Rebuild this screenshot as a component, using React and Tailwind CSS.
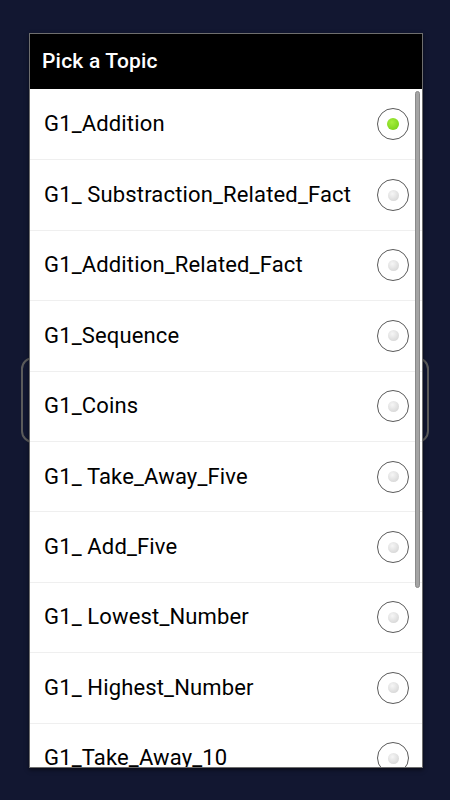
import React from "react";

const topics = [
  "G1_Addition",
  "G1_ Substraction_Related_Fact",
  "G1_Addition_Related_Fact",
  "G1_Sequence",
  "G1_Coins",
  "G1_ Take_Away_Five",
  "G1_ Add_Five",
  "G1_ Lowest_Number",
  "G1_ Highest_Number",
  "G1_Take_Away_10",
];

function Radio({ checked }) {
  return (
    <div className="w-[32px] h-[32px] rounded-full border-[1.5px] border-[#5a5a5a] bg-white flex items-center justify-center shrink-0">
      {checked ? (
        <div className="w-[12px] h-[12px] rounded-full bg-[radial-gradient(circle_at_40%_35%,#a6ee3c,#6fcb12)]" />
      ) : (
        <div className="w-[11px] h-[11px] rounded-full bg-[radial-gradient(circle_at_40%_35%,#f6f6f6,#cfcfcf)]" />
      )}
    </div>
  );
}

export default function App() {
  return (
    <div
      className="relative w-[450px] h-[800px] bg-[#121731] overflow-hidden"
      style={{ fontFamily: "Roboto, 'Noto Sans', sans-serif" }}
    >
      <div className="absolute left-[21px] top-[357px] w-[408px] h-[86px] rounded-[12px] border-2 border-[#5b5b5b]" />
      <div className="absolute left-[29px] top-[33px] w-[394px] h-[735px] border border-[#6e6e6e] bg-white flex flex-col overflow-hidden shadow-[0_2px_4px_rgba(0,0,0,0.5)]">
        <div className="h-[55px] bg-black flex items-center pl-[12px] shrink-0">
          <span className="text-white text-[21px] font-medium tracking-[0.2px]">Pick a Topic</span>
        </div>
        <div className="relative flex-1 overflow-hidden">
          <div className="flex flex-col">
            {topics.map((t, i) => (
              <div
                key={t}
                className={`h-[70.4px] flex items-center justify-between pl-[14px] pr-[13px] shrink-0 ${i > 0 ? "border-t border-[#efefef]" : ""}`}
              >
                <span className="text-[22px] text-black font-normal tracking-[0.15px] mt-[-1px]">{t}</span>
                <Radio checked={i === 0} />
              </div>
            ))}
          </div>
          <div className="absolute right-[2px] top-[2px] w-[5px] h-[497px] rounded-full bg-[#a4a4a4] border border-[#8a8a8a]" />
        </div>
      </div>
    </div>
  );
}
